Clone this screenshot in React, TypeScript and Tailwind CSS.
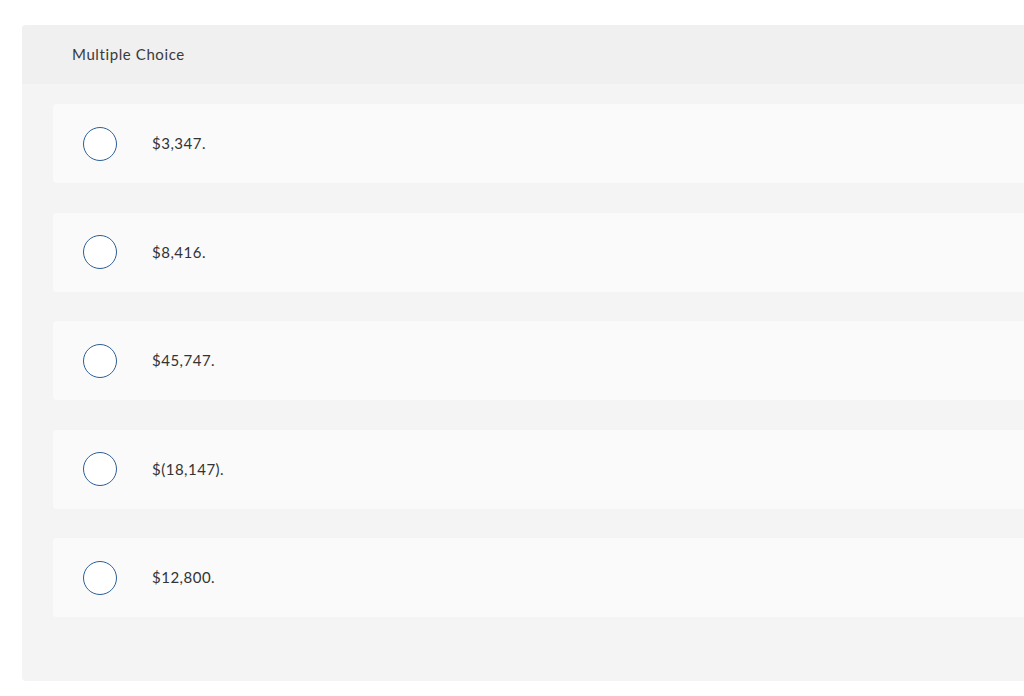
const choices = ["$3,347.", "$8,416.", "$45,747.", "$(18,147).", "$12,800."];

export default function App() {
  return (
    <div className="h-[696px] w-[1024px] overflow-hidden bg-white pt-[25px] pl-[22px] font-['Lato',sans-serif] text-[#333]">
      <div className="w-[1100px] rounded-sm bg-[#f4f4f4] pb-[64px]">
        <div className="flex h-[59px] items-center rounded-t-sm bg-[#f0f0f0] pl-[50px] text-[15px] tracking-[0.6px] text-[#3a3a3a]">
          Multiple Choice
        </div>
        <div className="flex flex-col gap-[29.5px] pt-[20px] pl-[31px]">
          {choices.map((c) => (
            <div
              key={c}
              className="flex h-[79px] items-center rounded-[4px] bg-[#fafafa] pl-[30px]"
            >
              <span className="h-[34px] w-[34px] shrink-0 rounded-full border-[1.5px] border-[#2c5f96] bg-white" />
              <span className="ml-[35px] text-[15px] tracking-[0.5px]">{c}</span>
            </div>
          ))}
        </div>
      </div>
    </div>
  );
}
